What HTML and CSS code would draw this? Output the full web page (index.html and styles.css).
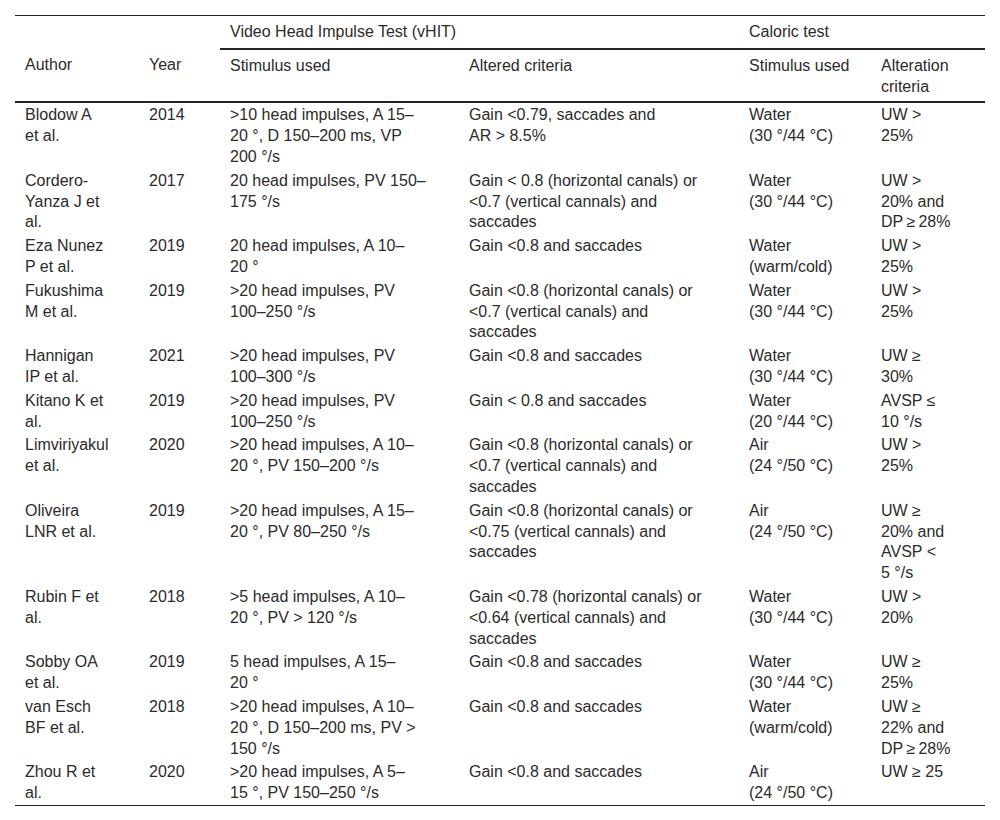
FILE: index.html
```html
<!DOCTYPE html>
<html lang="en">
<head>
<meta charset="utf-8">
<title>vHIT and caloric test criteria</title>
<link rel="stylesheet" href="styles.css">
</head>
<body>
<div class="page">
<table class="data">
<colgroup>
<col class="c-author"><col class="c-year"><col class="c-vstim"><col class="c-vcrit"><col class="c-cstim"><col class="c-ccrit">
</colgroup>
<thead>
<tr class="group">
<th></th><th></th>
<th colspan="2" class="span">Video Head Impulse Test (vHIT)</th>
<th colspan="2" class="span">Caloric test</th>
</tr>
<tr class="cols">
<th>Author</th><th>Year</th><th>Stimulus used</th><th>Altered criteria</th><th>Stimulus used</th><th>Alteration criteria</th>
</tr>
</thead>
<tbody>
<tr><td>Blodow A et al.</td><td>2014</td><td>&gt;10 head impulses, A 15–<wbr>20&nbsp;°, D 150–200 ms, VP 200&nbsp;°/s</td><td>Gain &lt;0.79, saccades and AR&nbsp;&gt;&nbsp;8.5%</td><td>Water (30&nbsp;°/44&nbsp;°C)</td><td>UW &gt; 25%</td></tr>
<tr><td>Cordero-Yanza J et al.</td><td>2017</td><td>20 head impulses, PV 150–<wbr>175&nbsp;°/s</td><td>Gain &lt; 0.8 (horizontal canals) or &lt;0.7 (vertical cannals) and saccades</td><td>Water (30&nbsp;°/44&nbsp;°C)</td><td>UW &gt; 20% and DP&#8201;≥&#8201;28%</td></tr>
<tr><td>Eza Nunez P et al.</td><td>2019</td><td>20 head impulses, A 10–<wbr>20&nbsp;°</td><td>Gain &lt;0.8 and saccades</td><td>Water (warm/cold)</td><td>UW &gt; 25%</td></tr>
<tr><td>Fukushima M et al.</td><td>2019</td><td>&gt;20 head impulses, PV 100–250&nbsp;°/s</td><td>Gain &lt;0.8 (horizontal canals) or &lt;0.7 (vertical canals) and saccades</td><td>Water (30&nbsp;°/44&nbsp;°C)</td><td>UW &gt; 25%</td></tr>
<tr><td>Hannigan IP et al.</td><td>2021</td><td>&gt;20 head impulses, PV 100–300&nbsp;°/s</td><td>Gain &lt;0.8 and saccades</td><td>Water (30&nbsp;°/44&nbsp;°C)</td><td>UW ≥ 30%</td></tr>
<tr><td>Kitano K et al.</td><td>2019</td><td>&gt;20 head impulses, PV 100–250&nbsp;°/s</td><td>Gain &lt; 0.8 and saccades</td><td>Water (20&nbsp;°/44&nbsp;°C)</td><td>AVSP ≤ 10&nbsp;°/s</td></tr>
<tr><td>Limviriyakul et al.</td><td>2020</td><td>&gt;20 head impulses, A 10–<wbr>20&nbsp;°, PV 150–200&nbsp;°/s</td><td>Gain &lt;0.8 (horizontal canals) or &lt;0.7 (vertical cannals) and saccades</td><td>Air (24&nbsp;°/50&nbsp;°C)</td><td>UW &gt; 25%</td></tr>
<tr><td>Oliveira LNR et al.</td><td>2019</td><td>&gt;20 head impulses, A 15–<wbr>20&nbsp;°, PV 80–250&nbsp;°/s</td><td>Gain &lt;0.8 (horizontal canals) or &lt;0.75 (vertical cannals) and saccades</td><td>Air (24&nbsp;°/50&nbsp;°C)</td><td>UW ≥ 20% and AVSP &lt; 5&nbsp;°/s</td></tr>
<tr><td>Rubin F et al.</td><td>2018</td><td>&gt;5 head impulses, A 10–<wbr>20&nbsp;°, PV &gt; 120&nbsp;°/s</td><td>Gain &lt;0.78 (horizontal canals) or &lt;0.64 (vertical cannals) and saccades</td><td>Water (30&nbsp;°/44&nbsp;°C)</td><td>UW &gt; 20%</td></tr>
<tr><td>Sobby OA et al.</td><td>2019</td><td>5 head impulses, A 15–<br>20&nbsp;°</td><td>Gain &lt;0.8 and saccades</td><td>Water (30&nbsp;°/44&nbsp;°C)</td><td>UW ≥ 25%</td></tr>
<tr><td>van Esch BF et al.</td><td>2018</td><td>&gt;20 head impulses, A 10–<wbr>20&nbsp;°, D 150–200 ms, PV &gt; 150&nbsp;°/s</td><td>Gain &lt;0.8 and saccades</td><td>Water (warm/cold)</td><td>UW ≥ 22% and DP&#8201;≥&#8201;28%</td></tr>
<tr><td>Zhou R et al.</td><td>2020</td><td>&gt;20 head impulses, A 5–<wbr>15&nbsp;°, PV 150–250&nbsp;°/s</td><td>Gain &lt;0.8 and saccades</td><td>Air (24&nbsp;°/50&nbsp;°C)</td><td>UW ≥ 25</td></tr>
</tbody>
</table>
</div>
</body>
</html>
```
FILE: styles.css
```css
html, body {
  margin: 0;
  padding: 0;
  background: #ffffff;
}

.page {
  padding: 15px;
}

.data {
  width: 970px;
  table-layout: fixed;
  border-collapse: collapse;
  font-family: "Liberation Sans", Arial, sans-serif;
  font-size: 16px;
  line-height: 20.8px;
  color: #2b2b2b;
  border-top: 1px solid #222;
  border-bottom: 1px solid #222;
}

.c-author { width: 124px; }
.c-year { width: 81px; }
.c-vstim { width: 239px; }
.c-vcrit { width: 280px; }
.c-cstim { width: 132px; }
.c-ccrit { width: 114px; }

.data th {
  font-weight: normal;
  text-align: left;
  vertical-align: top;
}

.group th {
  padding: 6px 10px 5px 10px;
}

.group th.span {
  border-bottom: 2px solid #222;
}

.cols th {
  padding: 6px 10px 4px 10px;
  border-bottom: 2px solid #222;
}

.data td {
  vertical-align: top;
  padding: 2px 10px 1px 10px;
}

.data tr > :nth-child(1) { padding-right: 30.5px; }
.data tr > :nth-child(2) { padding-right: 30px; }
.data tbody tr > :nth-child(3),
.cols > :nth-child(3) { padding-right: 29px; }
.data tbody tr > :nth-child(4),
.cols > :nth-child(4) { padding-right: 25px; }
.data tbody tr > :nth-child(5),
.cols > :nth-child(5) { padding-right: 18px; }
.data tbody tr > :nth-child(6),
.cols > :nth-child(6) { padding-right: 29px; }
```
